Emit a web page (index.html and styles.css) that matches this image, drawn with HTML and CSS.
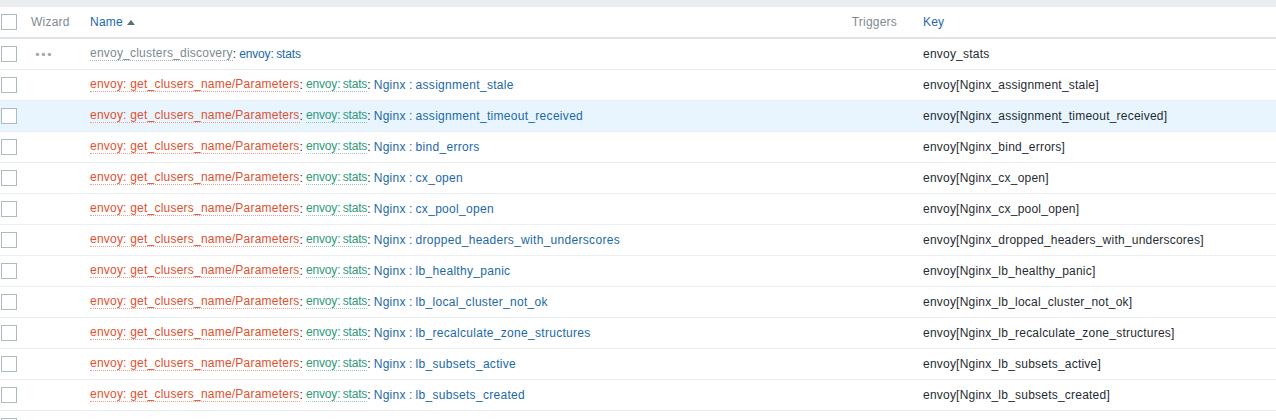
FILE: index.html
```html
<!DOCTYPE html>
<html>
<head>
<meta charset="utf-8">
<link rel="stylesheet" href="styles.css">
</head>
<body>
<div class="topband"></div>
<div class="list">
  <div class="row head">
    <div class="c-check"><span class="cb"></span></div>
    <div class="c-wiz">Wizard</div>
    <div class="c-name"><a class="link">Name</a><span class="arrow"></span></div>
    <div class="c-trig">Triggers</div>
    <div class="c-key"><a class="link">Key</a></div>
  </div>

  <div class="row">
    <div class="c-check"><span class="cb"></span></div>
    <div class="c-wiz"><svg class="dots" width="17" height="5" viewBox="0 0 17 5"><circle cx="2.5" cy="2.5" r="1.8"/><circle cx="8.5" cy="2.5" r="1.8"/><circle cx="14.5" cy="2.5" r="1.8"/></svg></div>
    <div class="c-name"><a class="alt grey">envoy_clusters_discovery</a>: <a class="link tight">envoy: stats</a></div>
    <div class="c-trig"></div>
    <div class="c-key">envoy_stats</div>
  </div>

  <div class="row">
    <div class="c-check"><span class="cb"></span></div>
    <div class="c-wiz"></div>
    <div class="c-name"><a class="alt red">envoy: get_clusers_name/Parameters</a>: <a class="alt green">envoy: stats</a>: <a class="link item">Nginx : assignment_stale</a></div>
    <div class="c-trig"></div>
    <div class="c-key">envoy[Nginx_assignment_stale]</div>
  </div>

  <div class="row hover">
    <div class="c-check"><span class="cb"></span></div>
    <div class="c-wiz"></div>
    <div class="c-name"><a class="alt red">envoy: get_clusers_name/Parameters</a>: <a class="alt green">envoy: stats</a>: <a class="link item">Nginx : assignment_timeout_received</a></div>
    <div class="c-trig"></div>
    <div class="c-key">envoy[Nginx_assignment_timeout_received]</div>
  </div>

  <div class="row">
    <div class="c-check"><span class="cb"></span></div>
    <div class="c-wiz"></div>
    <div class="c-name"><a class="alt red">envoy: get_clusers_name/Parameters</a>: <a class="alt green">envoy: stats</a>: <a class="link item">Nginx : bind_errors</a></div>
    <div class="c-trig"></div>
    <div class="c-key">envoy[Nginx_bind_errors]</div>
  </div>

  <div class="row">
    <div class="c-check"><span class="cb"></span></div>
    <div class="c-wiz"></div>
    <div class="c-name"><a class="alt red">envoy: get_clusers_name/Parameters</a>: <a class="alt green">envoy: stats</a>: <a class="link item">Nginx : cx_open</a></div>
    <div class="c-trig"></div>
    <div class="c-key">envoy[Nginx_cx_open]</div>
  </div>

  <div class="row">
    <div class="c-check"><span class="cb"></span></div>
    <div class="c-wiz"></div>
    <div class="c-name"><a class="alt red">envoy: get_clusers_name/Parameters</a>: <a class="alt green">envoy: stats</a>: <a class="link item">Nginx : cx_pool_open</a></div>
    <div class="c-trig"></div>
    <div class="c-key">envoy[Nginx_cx_pool_open]</div>
  </div>

  <div class="row">
    <div class="c-check"><span class="cb"></span></div>
    <div class="c-wiz"></div>
    <div class="c-name"><a class="alt red">envoy: get_clusers_name/Parameters</a>: <a class="alt green">envoy: stats</a>: <a class="link item">Nginx : dropped_headers_with_underscores</a></div>
    <div class="c-trig"></div>
    <div class="c-key">envoy[Nginx_dropped_headers_with_underscores]</div>
  </div>

  <div class="row">
    <div class="c-check"><span class="cb"></span></div>
    <div class="c-wiz"></div>
    <div class="c-name"><a class="alt red">envoy: get_clusers_name/Parameters</a>: <a class="alt green">envoy: stats</a>: <a class="link item">Nginx : lb_healthy_panic</a></div>
    <div class="c-trig"></div>
    <div class="c-key">envoy[Nginx_lb_healthy_panic]</div>
  </div>

  <div class="row">
    <div class="c-check"><span class="cb"></span></div>
    <div class="c-wiz"></div>
    <div class="c-name"><a class="alt red">envoy: get_clusers_name/Parameters</a>: <a class="alt green">envoy: stats</a>: <a class="link item">Nginx : lb_local_cluster_not_ok</a></div>
    <div class="c-trig"></div>
    <div class="c-key">envoy[Nginx_lb_local_cluster_not_ok]</div>
  </div>

  <div class="row">
    <div class="c-check"><span class="cb"></span></div>
    <div class="c-wiz"></div>
    <div class="c-name"><a class="alt red">envoy: get_clusers_name/Parameters</a>: <a class="alt green">envoy: stats</a>: <a class="link item">Nginx : lb_recalculate_zone_structures</a></div>
    <div class="c-trig"></div>
    <div class="c-key">envoy[Nginx_lb_recalculate_zone_structures]</div>
  </div>

  <div class="row">
    <div class="c-check"><span class="cb"></span></div>
    <div class="c-wiz"></div>
    <div class="c-name"><a class="alt red">envoy: get_clusers_name/Parameters</a>: <a class="alt green">envoy: stats</a>: <a class="link item">Nginx : lb_subsets_active</a></div>
    <div class="c-trig"></div>
    <div class="c-key">envoy[Nginx_lb_subsets_active]</div>
  </div>

  <div class="row">
    <div class="c-check"><span class="cb"></span></div>
    <div class="c-wiz"></div>
    <div class="c-name"><a class="alt red">envoy: get_clusers_name/Parameters</a>: <a class="alt green">envoy: stats</a>: <a class="link item">Nginx : lb_subsets_created</a></div>
    <div class="c-trig"></div>
    <div class="c-key">envoy[Nginx_lb_subsets_created]</div>
  </div>

  <div class="row">
    <div class="c-check"><span class="cb"></span></div>
    <div class="c-wiz"></div>
    <div class="c-name"></div>
    <div class="c-trig"></div>
    <div class="c-key"></div>
  </div>
</div>
</body>
</html>
```

FILE: styles.css
```css
html, body {
  margin: 0;
  padding: 0;
  background: #ffffff;
}
body {
  font-family: "Liberation Sans", Arial, sans-serif;
  font-size: 12px;
  letter-spacing: 0.22px;
  color: #1f2c33;
  overflow: hidden;
}
.topband {
  height: 7px;
  background: #ebeef0;
}
.list {
  display: flex;
  flex-direction: column;
}
.row {
  display: grid;
  grid-template-columns: 26px 59px 763px 70px 1fr;
  height: 30px;
  align-items: center;
  border-bottom: 1px solid #ebeef0;
  white-space: nowrap;
}
.row.head {
  border-bottom: 2px solid #dfe4e7;
}
.row.hover {
  background: #e8f5ff;
}
.c-check {
  padding-left: 1px;
  display: flex;
  align-items: center;
}
.cb {
  display: block;
  width: 14px;
  height: 14px;
  border: 1px solid #acbbc2;
  background: #ffffff;
}
.c-wiz {
  padding-left: 5px;
  color: #7e8b93;
  display: flex;
  align-items: center;
}
.dots {
  margin-left: 4px;
  fill: #a4adb3;
}
.c-name {
  padding-left: 5px;
  display: flex;
  align-items: center;
  white-space: pre;
  word-spacing: -0.6px;
}
.c-trig {
  text-align: right;
  padding-right: 21px;
  color: #7e8b93;
}
.c-key {
  padding-left: 5px;
}
.link {
  color: #1b69a8;
}
.link.tight {
  letter-spacing: -0.15px;
}
.link.item {
  letter-spacing: 0.3px;
}
.arrow {
  display: inline-block;
  width: 0;
  height: 0;
  margin-left: 4px;
  border-left: 4px solid transparent;
  border-right: 4px solid transparent;
  border-bottom: 5px solid #5e6f78;
}
.alt {
  border-bottom: 1px dotted;
  line-height: 13px;
}
.alt.grey {
  color: #7b8a93;
  border-bottom-color: #aab4ba;
}
.alt.red {
  color: #e0512f;
  border-bottom-color: #eea08d;
  word-spacing: 0;
}
.alt.green {
  color: #2e9a7c;
  border-bottom-color: #93c9b9;
  letter-spacing: -0.2px;
}
```
